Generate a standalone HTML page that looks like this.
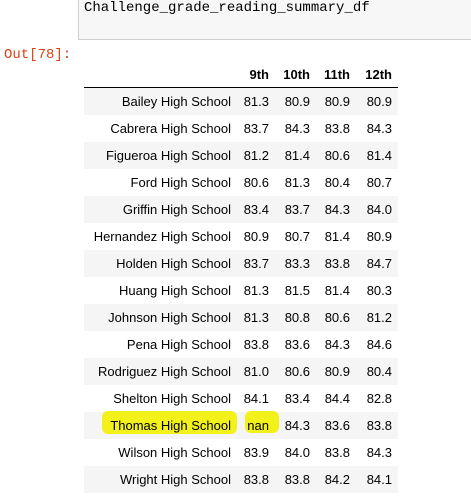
<!DOCTYPE html>
<html><head><style>
body{margin:0;width:471px;height:504px;background:#fff;position:relative;overflow:hidden;font-family:"Liberation Sans",Arial,sans-serif;}
.code{position:absolute;left:78px;top:-1px;width:400px;height:41px;background:#f7f7f7;border:1px solid #cfcfcf;box-sizing:border-box;}
.code span{position:absolute;left:5px;top:0px;font-family:"Liberation Mono","DejaVu Sans Mono",monospace;font-size:14px;color:#000;}
.out{position:absolute;left:4px;top:47px;font-family:"Liberation Mono","DejaVu Sans Mono",monospace;font-size:14px;color:#d84315;}
.row{position:absolute;left:84px;width:314px;height:27px;font-size:13px;color:#000;}
.row.s{background:#f5f5f5;}
.row div{position:absolute;top:6px;text-align:right;white-space:nowrap;}
.c0{right:167px}.c1{right:129px}.c2{right:88px}.c3{right:48px}.c4{right:6px}
.hdr{font-weight:bold;border-bottom:1px solid #000;height:26px;top:61px;}
.row .hl{position:absolute;background:#f2f21a;border-radius:6px;}
</style></head><body>
<div class="code"><span>Challenge_grade_reading_summary_df</span></div>
<div class="out">Out[78]:</div>
<div class="row hdr"><div class="c1">9th</div><div class="c2">10th</div><div class="c3">11th</div><div class="c4">12th</div></div>
<div id="t"></div>
<script>
var d=[["Bailey High School","81.3","80.9","80.9","80.9"],["Cabrera High School","83.7","84.3","83.8","84.3"],["Figueroa High School","81.2","81.4","80.6","81.4"],["Ford High School","80.6","81.3","80.4","80.7"],["Griffin High School","83.4","83.7","84.3","84.0"],["Hernandez High School","80.9","80.7","81.4","80.9"],["Holden High School","83.7","83.3","83.8","84.7"],["Huang High School","81.3","81.5","81.4","80.3"],["Johnson High School","81.3","80.8","80.6","81.2"],["Pena High School","83.8","83.6","84.3","84.6"],["Rodriguez High School","81.0","80.6","80.9","80.4"],["Shelton High School","84.1","83.4","84.4","82.8"],["Thomas High School","nan","84.3","83.6","83.8"],["Wilson High School","83.9","84.0","83.8","84.3"],["Wright High School","83.8","83.8","84.2","84.1"]];
var h="";d.forEach(function(r,i){h+='<div class="row'+(i%2==0?' s':'')+'" style="top:'+(88+i*27)+'px;">';
if(i==12){h+='<div class="hl" style="left:18px;top:-1px;width:135px;height:23px"></div><div class="hl" style="left:161px;top:-1px;width:34px;height:22px"></div>';}
r.forEach(function(c,j){h+='<div class="c'+j+'">'+c+'</div>'});h+='</div>'});
document.getElementById("t").innerHTML=h;
</script>
</body></html>
